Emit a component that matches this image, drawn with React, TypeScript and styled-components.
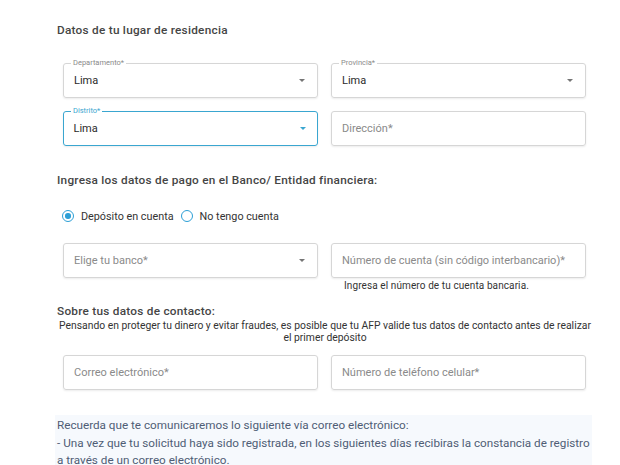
import React, { useState } from 'react';
import styled, { createGlobalStyle, css } from 'styled-components';

const GlobalStyle = createGlobalStyle`
  body {
    margin: 0;
    background: #ffffff;
    font-family: Roboto, "Liberation Sans", sans-serif;
    color: #333;
  }
`;

const Page = styled.div`
  width: 540px;
  padding: 0 0 0 55px;
`;

const Heading = styled.h2<{ $top: number }>`
  margin: ${p => p.$top}px 0 0 2px;
  font-size: 11.8px;
  font-weight: 500;
  letter-spacing: 0.25px;
  line-height: 16px;
  color: #454545;
`;

const Grid = styled.div<{ $top: number }>`
  display: grid;
  grid-template-columns: 255px 255px;
  column-gap: 13px;
  row-gap: 13px;
  margin: ${p => p.$top}px 8px 0 8px;
`;

const Field = styled.div<{ $focused?: boolean }>`
  position: relative;
  height: 35px;
  box-sizing: border-box;
  border: 1px solid #d6d6d6;
  border-radius: 3px;
  box-shadow: 0 1px 2px rgba(0, 0, 0, 0.08);
  display: flex;
  align-items: center;
  padding: 0 10px;
  ${p =>
    p.$focused &&
    css`
      border: 1.5px solid #3aa6d0;
      padding: 0 9.5px;
    `}
`;

const Legend = styled.span<{ $focused?: boolean }>`
  position: absolute;
  top: -6px;
  left: 7px;
  padding: 0 2px;
  background: #fff;
  font-size: 7.5px;
  line-height: 10px;
  color: ${p => (p.$focused ? '#3aa6d0' : '#8a8a8a')};
`;

const Value = styled.span<{ $placeholder?: boolean }>`
  flex: 1;
  font-size: 11px;
  color: ${p => (p.$placeholder ? '#8a8a8a' : '#2a2a2a')};
  white-space: nowrap;
`;

const Arrow = styled.span<{ $focused?: boolean }>`
  width: 0;
  height: 0;
  margin-right: 2px;
  border-left: 3.5px solid transparent;
  border-right: 3.5px solid transparent;
  border-top: 3.5px solid ${p => (p.$focused ? '#3aa6d0' : '#757575')};
`;

const Helper = styled.div`
  margin: 1px 0 0 13px;
  font-size: 10px;
  line-height: 13px;
  color: #333;
  letter-spacing: 0.1px;
`;

const RadioRow = styled.div`
  display: flex;
  align-items: center;
  margin: 20px 0 0 7px;
  height: 16px;
`;

const RadioOption = styled.label`
  display: flex;
  align-items: center;
  gap: 7px;
  margin-right: 7px;
  font-size: 10.8px;
  color: #333;
  cursor: pointer;
`;

const RadioCircle = styled.span<{ $checked: boolean }>`
  width: 12px;
  height: 12px;
  box-sizing: border-box;
  border-radius: 50%;
  border: 1.5px solid #2c9fd6;
  display: flex;
  align-items: center;
  justify-content: center;
  &::after {
    content: '';
    width: 5.5px;
    height: 5.5px;
    border-radius: 50%;
    background: ${p => (p.$checked ? '#2c9fd6' : 'transparent')};
  }
`;

const Notice = styled.p`
  margin: 1px 0 0 0;
  font-size: 10.35px;
  line-height: 12px;
  text-align: center;
  color: #333;
`;

const InfoBox = styled.div`
  width: 537px;
  box-sizing: border-box;
  margin: 25px 0 0 0;
  padding: 2px 0 4px 2px;
  background: #f6f9fd;
  font-size: 11.7px;
  line-height: 17.5px;
  color: #4f5d75;
`;

type FieldProps = {
  label?: string;
  value?: string;
  placeholder?: string;
  select?: boolean;
  focused?: boolean;
};

const OutlinedField: React.FC<FieldProps> = ({ label, value, placeholder, select, focused }) => (
  <Field $focused={focused}>
    {label && <Legend $focused={focused}>{label}</Legend>}
    <Value $placeholder={!value}>{value || placeholder}</Value>
    {select && <Arrow $focused={focused} />}
  </Field>
);

const App: React.FC = () => {
  const [payment, setPayment] = useState('deposito');

  return (
    <Page>
      <GlobalStyle />
      <Heading $top={22}>Datos de tu lugar de residencia</Heading>
      <Grid $top={25}>
        <OutlinedField label="Departamento*" value="Lima" select />
        <OutlinedField label="Provincia*" value="Lima" select />
        <OutlinedField label="Distrito*" value="Lima" select focused />
        <OutlinedField placeholder="Dirección*" />
      </Grid>

      <Heading $top={26}>Ingresa los datos de pago en el Banco/ Entidad financiera:</Heading>
      <RadioRow>
        <RadioOption onClick={() => setPayment('deposito')}>
          <RadioCircle $checked={payment === 'deposito'} />
          Depósito en cuenta
        </RadioOption>
        <RadioOption onClick={() => setPayment('ninguna')}>
          <RadioCircle $checked={payment === 'ninguna'} />
          No tengo cuenta
        </RadioOption>
      </RadioRow>
      <Grid $top={19}>
        <OutlinedField placeholder="Elige tu banco*" select />
        <div>
          <OutlinedField placeholder="Número de cuenta (sin código interbancario)*" />
          <Helper>Ingresa el número de tu cuenta bancaria.</Helper>
        </div>
      </Grid>

      <Heading $top={11}>Sobre tus datos de contacto:</Heading>
      <Notice>
        Pensando en proteger tu dinero y evitar fraudes, es posible que tu AFP valide tus datos de contacto antes de realizar
        <br />
        el primer depósito
      </Notice>
      <Grid $top={11}>
        <OutlinedField placeholder="Correo electrónico*" />
        <OutlinedField placeholder="Número de teléfono celular*" />
      </Grid>

      <InfoBox>
        Recuerda que te comunicaremos lo siguiente vía correo electrónico:
        <br />
        - Una vez que tu solicitud haya sido registrada, en los siguientes días recibiras la constancia de registro a
        través de un correo electrónico.
      </InfoBox>
    </Page>
  );
};

export default App;
